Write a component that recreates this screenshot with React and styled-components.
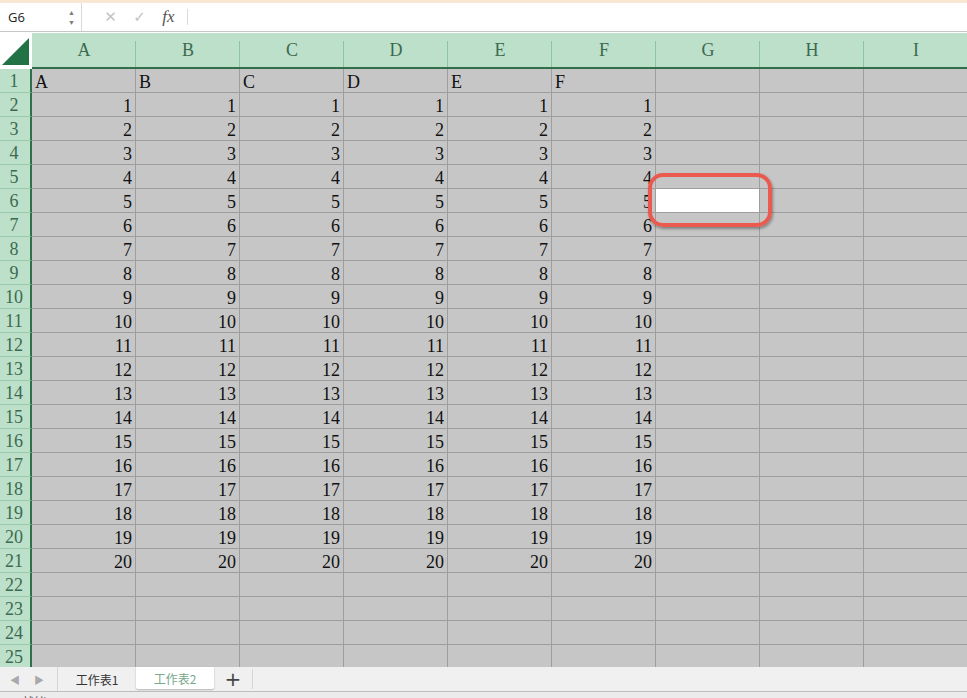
import React from "react";
import styled, { createGlobalStyle } from "styled-components";

const Global = createGlobalStyle`
  html, body { margin: 0; padding: 0; overflow: hidden; background: #fff; }
  #root { width: 967px; height: 698px; overflow: hidden; }
`;

const Shell = styled.div`
  position: relative;
  width: 967px;
  height: 698px;
  display: flex;
  flex-direction: column;
  overflow: hidden;
  font-family: "Noto Sans", "Noto Sans CJK TC", sans-serif;
`;

const TopStrip = styled.div`
  height: 3px;
  flex: none;
  background: #f9e6d3;
`;

const FormulaBar = styled.div`
  height: 28px;
  flex: none;
  display: flex;
  align-items: stretch;
  background: #fff;
  border-bottom: 1px solid #c6c6c6;
`;

const NameBox = styled.div`
  width: 82px;
  display: flex;
  align-items: center;
  justify-content: space-between;
  padding: 0 6px 0 8px;
  box-sizing: border-box;
  border-right: 1px solid #d9d9d9;
  font-family: "Open Sans", "Noto Sans", sans-serif;
  font-size: 13px;
  color: #222;
`;

const Spin = styled.div`
  display: flex;
  flex-direction: column;
  gap: 3px;
  color: #7a7a7a;
  font-size: 7px;
  line-height: 7px;
`;

const FxGroup = styled.div`
  display: flex;
  align-items: center;
  padding-left: 14px;
`;

const FxIcon = styled.span`
  width: 29px;
  display: flex;
  justify-content: center;
  color: ${p => (p.$dim ? "#c3c3c3" : "#555")};
  font-family: ${p => (p.$italic ? '"Liberation Serif", serif' : '"DejaVu Sans", sans-serif')};
  font-style: ${p => (p.$italic ? "italic" : "normal")};
  font-size: ${p => (p.$italic ? "17px" : "15px")};
`;

const FxDivider = styled.div`
  width: 1px;
  height: 16px;
  background: #d9d9d9;
  margin-left: 4px;
`;

const SheetArea = styled.div`
  flex: none;
  height: 634px;
  margin-top: 1px;
  overflow: hidden;
`;

const Grid = styled.div`
  display: grid;
  grid-template-columns: 32px repeat(9, 104px);
  grid-template-rows: 36px;
  grid-auto-rows: 24px;
`;

const Corner = styled.div`
  background: #fff;
  display: flex;
  align-items: flex-end;
  justify-content: flex-end;
  padding: 0 3px 4px 0;
  box-sizing: border-box;
`;

const ColHead = styled.div`
  position: relative;
  background: #bde0cb;
  border-bottom: 2px solid #2f6f49;
  color: #3c6a4f;
  font-family: "Liberation Serif", serif;
  font-size: 18px;
  display: flex;
  align-items: center;
  justify-content: center;
  padding-top: 1px;
  box-sizing: border-box;
  &::after {
    content: "";
    position: absolute;
    right: 0;
    top: 8px;
    bottom: 0;
    width: 1px;
    background: #8cc59f;
  }
`;

const RowHead = styled.div`
  background: #bde0cb;
  border-right: 2px solid #2f6f49;
  border-bottom: 1px solid #95cba8;
  color: #3c6a4f;
  font-family: "Liberation Serif", serif;
  font-size: 18px;
  line-height: 24px;
  text-align: center;
  box-sizing: border-box;
  padding-right: 2px;
`;

const Cell = styled.div`
  background: ${p => (p.$selected ? "#ffffff" : "#c6c6c6")};
  border-right: 1px solid #9e9e9e;
  border-bottom: 1px solid #9e9e9e;
  box-sizing: border-box;
  font-family: "Liberation Serif", serif;
  font-size: 18px;
  line-height: 26px;
  color: #111;
  text-align: ${p => (p.$num ? "right" : "left")};
  padding: 0 3px;
  white-space: nowrap;
  overflow: hidden;
`;

const Highlight = styled.div`
  position: absolute;
  left: 648px;
  top: 173px;
  width: 124px;
  height: 54px;
  box-sizing: border-box;
  border: 4px solid #ea5a4e;
  border-radius: 15px;
  box-shadow: 1px 2px 3px rgba(0, 0, 0, 0.35);
  pointer-events: none;
`;

const TabBar = styled.div`
  height: 24px;
  flex: none;
  display: flex;
  align-items: stretch;
  background: #f0f0f0;
  font-size: 13px;
`;

const Arrows = styled.div`
  width: 58px;
  display: flex;
  align-items: center;
  gap: 14px;
  padding-left: 10px;
  box-sizing: border-box;
  border-right: 1px solid #d6d6d6;
  color: #a9a9a9;
  font-size: 10px;
`;

const Tab = styled.div`
  width: 78px;
  display: flex;
  align-items: center;
  justify-content: center;
  font-family: "Noto Sans CJK TC", "Noto Sans", sans-serif;
  font-size: 12px;
  color: ${p => (p.$active ? "#78a88a" : "#333")};
  background: ${p => (p.$active ? "#fff" : "transparent")};
  box-shadow: ${p => (p.$active ? "0 1px 2px rgba(0,0,0,0.25)" : "none")};
  margin-bottom: ${p => (p.$active ? "2px" : "0")};
  border-radius: 0 0 2px 2px;
`;

const AddTab = styled.div`
  width: 38px;
  display: flex;
  align-items: center;
  justify-content: center;
  border-right: 1px solid #d6d6d6;
  color: #444;
  font-size: 20px;
  font-family: "DejaVu Sans", sans-serif;
  margin: 2px 0;
`;

const StatusBar = styled.div`
  height: 22px;
  flex: none;
  display: flex;
  align-items: flex-start;
  justify-content: space-between;
  border-top: 1px solid #bdbdbd;
  background: #ececec;
  padding: 3px 8px 0 22px;
  box-sizing: border-box;
  font-family: "Noto Sans CJK TC", sans-serif;
  font-size: 12px;
  line-height: 14px;
  color: #555;
`;

const StatusIcons = styled.div`
  display: flex;
  gap: 10px;
  align-items: center;
  padding-top: 2px;
`;

const SmallBox = styled.div`
  width: 10px;
  height: 10px;
  border: 1px solid #666;
`;

const cols = ["A", "B", "C", "D", "E", "F", "G", "H", "I"];

export default function App() {
  const rows = [];
  for (let r = 1; r <= 25; r++) {
    rows.push(
      <React.Fragment key={r}>
        <RowHead>{r}</RowHead>
        {cols.map((c, ci) => {
          let content = "";
          let num = false;
          if (ci < 6) {
            if (r === 1) content = c;
            else if (r <= 21) {
              content = r - 1;
              num = true;
            }
          }
          const selected = c === "G" && r === 6;
          return (
            <Cell key={c} $num={num} $selected={selected}>
              {content}
            </Cell>
          );
        })}
      </React.Fragment>
    );
  }

  return (
    <Shell>
      <Global />
      <TopStrip />
      <FormulaBar>
        <NameBox>
          <span>G6</span>
          <Spin>
            <span>▲</span>
            <span>▼</span>
          </Spin>
        </NameBox>
        <FxGroup>
          <FxIcon $dim>✕</FxIcon>
          <FxIcon $dim>✓</FxIcon>
          <FxIcon $italic>fx</FxIcon>
          <FxDivider />
        </FxGroup>
      </FormulaBar>
      <SheetArea>
        <Grid>
          <Corner>
            <svg width="27" height="27" viewBox="0 0 27 27">
              <polygon points="27,0 27,27 0,27" fill="#217346" />
            </svg>
          </Corner>
          {cols.map(c => (
            <ColHead key={c}>{c}</ColHead>
          ))}
          {rows}
        </Grid>
      </SheetArea>
      <TabBar>
        <Arrows>
          <span>◀</span>
          <span>▶</span>
        </Arrows>
        <Tab>工作表1</Tab>
        <Tab $active>工作表2</Tab>
        <AddTab>+</AddTab>
      </TabBar>
      <StatusBar>
        <span>就緒</span>
        <StatusIcons>
          <span>協助工具</span>
          <SmallBox />
          <SmallBox />
          <SmallBox />
        </StatusIcons>
      </StatusBar>
      <Highlight />
    </Shell>
  );
}
